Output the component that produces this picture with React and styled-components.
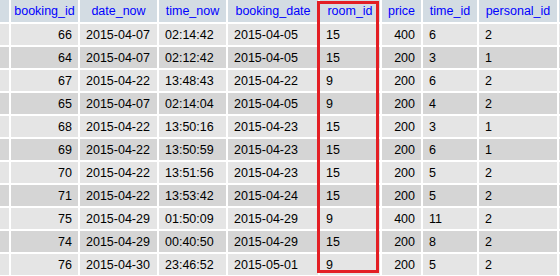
import React from "react";
import styled, { createGlobalStyle } from "styled-components";

const Global = createGlobalStyle`
  html, body { margin: 0; padding: 0; background: #ffffff; }
  body { font-family: "Liberation Sans", Arial, sans-serif; }
`;

const Viewport = styled.div`
  position: relative;
  width: 560px;
  height: 276px;
  overflow: hidden;
  background: #ffffff;
`;

const Table = styled.table`
  margin-left: -2px;
  margin-top: -2px;
  border-collapse: separate;
  border-spacing: 2px;
  table-layout: fixed;
  width: 583px;
  font-family: "Liberation Sans", Arial, sans-serif;
  font-size: 12.5px;
  color: #000000;
`;

const Th = styled.th`
  box-sizing: border-box;
  height: 22px;
  padding: 0 2px;
  background: #d3dce3;
  color: #0000ff;
  font-weight: normal;
  text-align: center;
  white-space: nowrap;
  overflow: hidden;
`;

const Td = styled.td`
  box-sizing: border-box;
  height: 21px;
  padding: 0 6px;
  background: ${(p) => (p.$even ? "#d5d5d5" : "#e5e5e5")};
  text-align: ${(p) => (p.$right ? "right" : "left")};
  white-space: nowrap;
  overflow: hidden;
`;

const Highlight = styled.div`
  position: absolute;
  left: 317px;
  top: 1px;
  width: 62px;
  height: 272px;
  box-sizing: border-box;
  border: 3px solid #e31e24;
  pointer-events: none;
`;

const columns = [
  { key: "", width: 9 },
  { key: "booking_id", width: 67, right: true },
  { key: "date_now", width: 77 },
  { key: "time_now", width: 67 },
  { key: "booking_date", width: 90 },
  { key: "room_id", width: 60 },
  { key: "price", width: 39, right: true },
  { key: "time_id", width: 54 },
  { key: "personal_id", width: 78 },
  { key: " ", width: 20 },
];

const rows = [
  ["66", "2015-04-07", "02:14:42", "2015-04-05", "15", "400", "6", "2"],
  ["64", "2015-04-07", "02:12:42", "2015-04-05", "15", "200", "3", "1"],
  ["67", "2015-04-22", "13:48:43", "2015-04-22", "9", "200", "6", "2"],
  ["65", "2015-04-07", "02:14:04", "2015-04-05", "9", "200", "4", "2"],
  ["68", "2015-04-22", "13:50:16", "2015-04-23", "15", "200", "3", "1"],
  ["69", "2015-04-22", "13:50:59", "2015-04-23", "15", "200", "6", "1"],
  ["70", "2015-04-22", "13:51:56", "2015-04-23", "15", "200", "5", "2"],
  ["71", "2015-04-22", "13:53:42", "2015-04-24", "15", "200", "5", "2"],
  ["75", "2015-04-29", "01:50:09", "2015-04-29", "9", "400", "11", "2"],
  ["74", "2015-04-29", "00:40:50", "2015-04-29", "15", "200", "8", "2"],
  ["76", "2015-04-30", "23:46:52", "2015-05-01", "9", "200", "5", "2"],
];

export default function App() {
  return (
    <Viewport>
      <Global />
      <Table>
        <colgroup>
          {columns.map((c, i) => (
            <col key={i} style={{ width: c.width }} />
          ))}
        </colgroup>
        <thead>
          <tr>
            {columns.map((c, i) => (
              <Th key={i}>{c.key.trim()}</Th>
            ))}
          </tr>
        </thead>
        <tbody>
          {rows.map((r, ri) => {
            const even = ri % 2 === 1;
            return (
              <tr key={ri}>
                <Td $even={even} />
                {r.map((v, ci) => (
                  <Td key={ci} $even={even} $right={columns[ci + 1].right}>
                    {v}
                  </Td>
                ))}
                <Td $even={even} />
              </tr>
            );
          })}
        </tbody>
      </Table>
      <Highlight />
    </Viewport>
  );
}
